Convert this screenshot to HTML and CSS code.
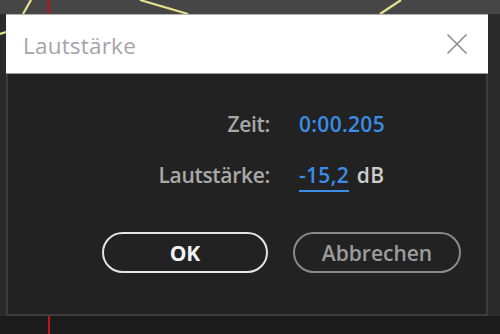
FILE: index.html
```html
<!DOCTYPE html>
<html lang="de">
<head>
<meta charset="utf-8">
<title>Lautstärke</title>
<link rel="stylesheet" href="styles.css">
</head>
<body>
<div class="scene">
  <svg class="backdrop" width="500" height="334" viewBox="0 0 500 334" aria-hidden="true">
    <rect x="0" y="0" width="500" height="14" fill="#464646"/>
    <rect x="0" y="14" width="500" height="302" fill="#2a2a2a"/>
    <rect x="0" y="316" width="500" height="18" fill="#1c1c1c"/>
    <line x1="48.5" y1="0" x2="48.5" y2="14" stroke="#c0151c" stroke-width="2"/>
    <line x1="49" y1="316" x2="49" y2="334" stroke="#c0151c" stroke-width="2"/>
    <g stroke="#e6e38c" stroke-width="2.2" fill="none">
      <line x1="31" y1="0" x2="23" y2="14"/>
      <line x1="140" y1="0" x2="188" y2="14"/>
      <line x1="401" y1="0" x2="380" y2="14"/>
      <line x1="0" y1="34" x2="6" y2="32"/>
    </g>
  </svg>

  <div class="dialog">
    <div class="titlebar">
      <span class="title">Lautstärke</span>
      <svg class="close" width="22" height="22" viewBox="0 0 22 22" aria-label="Schließen">
        <path d="M1.5 1.5 L20.5 20.5 M20.5 1.5 L1.5 20.5" stroke="#8e8e8e" stroke-width="1.6" fill="none"/>
      </svg>
    </div>
    <div class="content">
      <div class="fields">
        <span class="label">Zeit:</span>
        <span class="value">0:00.205</span>
        <span class="label">Lautstärke:</span>
        <span class="value"><span class="link">-15,2</span> <span class="unit">dB</span></span>
      </div>
      <div class="buttons">
        <button class="btn btn-primary">OK</button>
        <button class="btn btn-secondary">Abbrechen</button>
      </div>
    </div>
  </div>
</div>
</body>
</html>
```

FILE: styles.css
```css
html, body {
  margin: 0;
  padding: 0;
  background: #2a2a2a;
}

.scene {
  position: relative;
  width: 500px;
  height: 334px;
  overflow: hidden;
  font-family: "Open Sans", "Noto Sans", sans-serif;
}

.backdrop {
  position: absolute;
  left: 0;
  top: 0;
}

.dialog {
  position: absolute;
  left: 6px;
  top: 14px;
  width: 482px;
  display: flex;
  flex-direction: column;
}

.titlebar {
  height: 60px;
  box-sizing: border-box;
  background: #ffffff;
  border-top: 1px solid #b4b4b4;
  border-bottom: 1px solid #9a9a9a;
  display: flex;
  align-items: center;
  justify-content: space-between;
  padding: 0 20px 0 17px;
}

.title {
  font-size: 22.5px;
  color: #a7a2a9;
  font-weight: 400;
  letter-spacing: 0.2px;
  margin-top: 2px;
}

.close {
  display: block;
}

.content {
  height: 242px;
  box-sizing: border-box;
  background: #222222;
  border: 2px solid #3c3c3c;
  border-top: none;
  display: flex;
  flex-direction: column;
  padding-top: 35px;
}

.fields {
  display: grid;
  grid-template-columns: 262px auto;
  column-gap: 29px;
  row-gap: 21px;
  font-size: 21px;
  line-height: 30px;
  font-weight: 600;
}

.label {
  text-align: right;
  color: #a8a8a8;
  letter-spacing: -0.3px;
}

.value {
  color: #3a8ee6;
  white-space: nowrap;
  letter-spacing: 0.3px;
}

.link {
  text-decoration: underline;
  text-decoration-thickness: 2px;
  text-underline-offset: 7px;
}

.unit {
  color: #cdcdcd;
  margin-left: 2px;
}

.buttons {
  display: flex;
  justify-content: flex-end;
  gap: 25px;
  margin-top: 42px;
  padding-right: 25px;
}

.btn {
  height: 41px;
  box-sizing: border-box;
  border-radius: 21px;
  background: #222222;
  font-family: "Open Sans", "Noto Sans", sans-serif;
  font-size: 21px;
  font-weight: 600;
  padding: 0;
  display: flex;
  align-items: center;
  justify-content: center;
}

.btn-primary {
  width: 166px;
  border: 2px solid #e4e4e4;
  color: #f2f2f2;
  font-weight: 700;
}

.btn-secondary {
  width: 168px;
  border: 2px solid #8a8a8a;
  color: #9c9c9c;
}
```
